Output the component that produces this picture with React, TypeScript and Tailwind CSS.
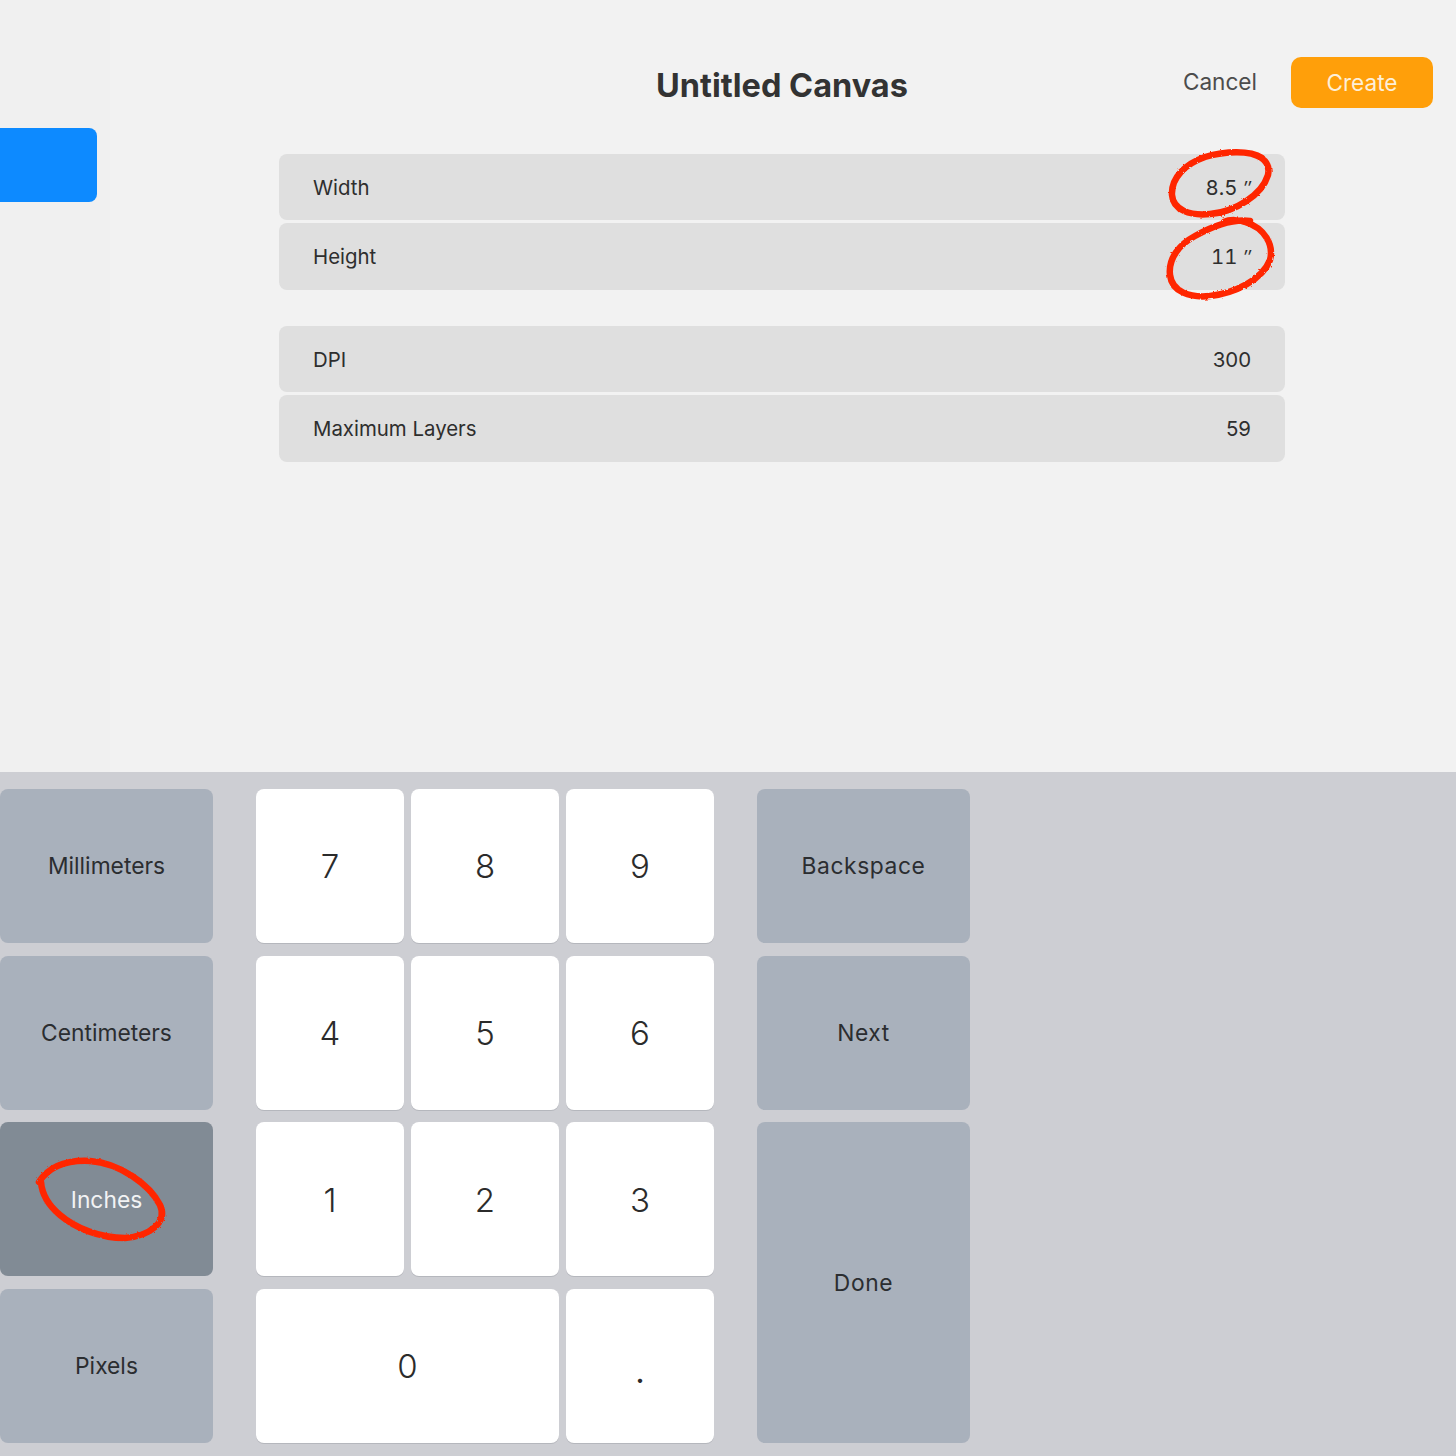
import React from 'react';

const font = { fontFamily: 'Inter, "Liberation Sans", sans-serif' };

function SettingRow({ label, value }: { label: string; value: React.ReactNode }) {
  return (
    <div className="flex h-[66.5px] items-center justify-between rounded-lg bg-[#dfdfdf] px-[34px] pt-[3px] text-[20.4px] text-[#2e2e2e]">
      <span>{label}</span>
      <span>{value}</span>
    </div>
  );
}

function Inch({ n }: { n: string }) {
  return (
    <span className="tabular-nums">
      {n} <i className="text-[18px]">″</i>
    </span>
  );
}

function KeyButton({ label, active, className }: { label: string; active?: boolean; className?: string }) {
  return (
    <button
      className={
        'flex items-center justify-center rounded-lg pt-[1px] text-[22.8px] ' +
        (active ? 'bg-[#818b95] text-[#f2f3f4] ' : 'bg-[#a9b1bc] text-[#2b2d30] ') +
        (className || '')
      }
    >
      {label}
    </button>
  );
}

function NumKey({ label, className }: { label: string; className?: string }) {
  return (
    <button className={'flex items-center justify-center rounded-lg bg-white pt-[2px] text-[33px] font-light text-[#2b2b2b] shadow-[0_1px_0_#b5b7bd] ' + (className || '')}>
      {label}
    </button>
  );
}

function Scribbles() {
  return (
    <svg viewBox="0 0 1456 1456" className="pointer-events-none absolute left-0 top-0 h-[1456px] w-[1456px]" fill="none">
      <filter id="rough">
        <feTurbulence type="fractalNoise" baseFrequency="0.35" numOctaves="2" seed="4" />
        <feDisplacementMap in="SourceGraphic" scale="2.5" />
      </filter>
      <g stroke="#ff2600" strokeWidth="6.5" strokeLinecap="round" filter="url(#rough)">
        <path d="M1262 158C1250 150 1225 151 1205 157C1185 164 1171 178 1172 195C1173 210 1190 216 1210 214C1235 212 1262 195 1268 175C1270 165 1266 158 1252 154" />
        <path d="M1250 221C1235 219 1215 225 1195 236C1180 244 1168 258 1170 275C1172 292 1190 298 1210 296C1235 293 1262 280 1270 260C1274 245 1265 228 1245 222C1240 220 1230 219 1224 222" />
        <path d="M39 1182C50 1165 70 1160 90 1161C120 1163 150 1185 160 1205C168 1222 150 1236 125 1238C100 1238 75 1228 60 1215C48 1205 42 1195 41 1182" />
      </g>
    </svg>
  );
}

export default function App() {
  return (
    <div className="relative h-[1456px] w-[1456px] overflow-hidden bg-[#f2f2f2]" style={font}>
      <div className="flex h-[772px]">
        <aside className="h-full w-[110px] shrink-0 bg-[#f0f0f0] pt-[128px]">
          <div className="h-[74px] w-[97px] rounded-r-lg bg-[#0d8aff]"></div>
        </aside>
        <main className="flex-1">
          <header className="flex h-[153.5px] items-start pl-[546px] pr-[23px] pt-[57px]">
            <h1 className="mt-[8px] w-[252px] whitespace-nowrap text-center text-[32.5px] font-bold leading-[42px] text-[#333333]">Untitled Canvas</h1>
            <button className="ml-auto mt-[8px] text-[22.6px] leading-[34px] text-[#4c4c4c]">Cancel</button>
            <button className="ml-[34px] h-[51px] w-[142px] rounded-[10px] bg-[#ff9f0a] text-[22.6px] text-[#fdefd8]">Create</button>
          </header>
          <div className="ml-[169px] w-[1006px]">
            <div className="flex flex-col gap-[3px]">
              <SettingRow label="Width" value={<Inch n="8.5" />} />
              <SettingRow label="Height" value={<Inch n="11" />} />
            </div>
            <div className="mt-[36px] flex flex-col gap-[3px]">
              <SettingRow label="DPI" value="300" />
              <SettingRow label="Maximum Layers" value="59" />
            </div>
          </div>
        </main>
      </div>

      <div className="flex h-[684px] gap-[43px] bg-[#cdced3] pt-[17px]">
        <div className="grid h-[654px] w-[213px] grid-rows-4 gap-[12.67px]">
          <KeyButton label="Millimeters" />
          <KeyButton label="Centimeters" />
          <KeyButton label="Inches" active />
          <KeyButton label="Pixels" />
        </div>
        <div className="grid h-[654px] w-[458px] grid-cols-3 grid-rows-4 gap-x-[7px] gap-y-[12.67px]">
          {['7', '8', '9', '4', '5', '6', '1', '2', '3'].map((n) => (
            <NumKey key={n} label={n} />
          ))}
          <NumKey label="0" className="col-span-2" />
          <NumKey label="." className="pt-[12px] font-normal" />
        </div>
        <div className="grid h-[654px] w-[213px] grid-rows-4 gap-[12.67px] tracking-[0.6px]">
          <KeyButton label="Backspace" />
          <KeyButton label="Next" />
          <KeyButton label="Done" className="row-span-2" />
        </div>
      </div>

      <Scribbles />
    </div>
  );
}
